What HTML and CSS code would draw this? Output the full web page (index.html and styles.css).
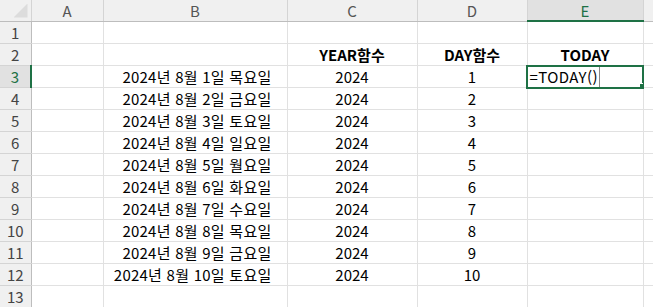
FILE: index.html
```html
<!DOCTYPE html>
<html lang="ko">
<head>
  <meta charset="UTF-8" />
  <title>TODAY 함수</title>
  <link rel="stylesheet" href="styles.css">
</head>
<body>
  <table class="sheet">
    <colgroup>
      <col class="c-head">
      <col class="c-a">
      <col class="c-b">
      <col class="c-c">
      <col class="c-d">
      <col class="c-e">
      <col class="c-f">
    </colgroup>
    <thead>
      <tr>
        <th class="corner"><span class="tri"></span></th>
        <th>A</th>
        <th>B</th>
        <th>C</th>
        <th>D</th>
        <th class="sel-col">E</th>
        <th></th>
      </tr>
    </thead>
    <tbody>
      <tr><th>1</th><td></td><td></td><td></td><td></td><td></td><td></td></tr>
      <tr><th>2</th><td></td><td></td><td class="bold">YEAR함수</td><td class="bold">DAY함수</td><td class="bold">TODAY</td><td></td></tr>
      <tr><th class="sel-row">3</th><td></td><td class="date">2024년 8월 1일 목요일</td><td>2024</td><td>1</td><td class="active"><span class="edit">=TODAY()</span><span class="handle"></span></td><td></td></tr>
      <tr><th>4</th><td></td><td class="date">2024년 8월 2일 금요일</td><td>2024</td><td>2</td><td></td><td></td></tr>
      <tr><th>5</th><td></td><td class="date">2024년 8월 3일 토요일</td><td>2024</td><td>3</td><td></td><td></td></tr>
      <tr><th>6</th><td></td><td class="date">2024년 8월 4일 일요일</td><td>2024</td><td>4</td><td></td><td></td></tr>
      <tr><th>7</th><td></td><td class="date">2024년 8월 5일 월요일</td><td>2024</td><td>5</td><td></td><td></td></tr>
      <tr><th>8</th><td></td><td class="date">2024년 8월 6일 화요일</td><td>2024</td><td>6</td><td></td><td></td></tr>
      <tr><th>9</th><td></td><td class="date">2024년 8월 7일 수요일</td><td>2024</td><td>7</td><td></td><td></td></tr>
      <tr><th>10</th><td></td><td class="date">2024년 8월 8일 목요일</td><td>2024</td><td>8</td><td></td><td></td></tr>
      <tr><th>11</th><td></td><td class="date">2024년 8월 9일 금요일</td><td>2024</td><td>9</td><td></td><td></td></tr>
      <tr><th>12</th><td></td><td class="date">2024년 8월 10일 토요일</td><td>2024</td><td>10</td><td></td><td></td></tr>
      <tr><th>13</th><td></td><td></td><td></td><td></td><td></td><td></td></tr>
    </tbody>
  </table>
</body>
</html>
```

FILE: styles.css
```css
body {
  margin: 0;
  background: #fff;
  font-family: "Noto Sans CJK KR", "Noto Sans", sans-serif;
  overflow: hidden;
}
.sheet {
  border-collapse: collapse;
  table-layout: fixed;
  width: 653px;
  font-size: 15px;
  color: #000;
}
.c-head { width: 31px; }
.c-a { width: 72px; }
.c-b { width: 184px; }
.c-c { width: 130px; }
.c-d { width: 110px; }
.c-e { width: 116px; }
.c-f { width: 10px; }
.sheet th, .sheet td {
  padding: 0;
  overflow: hidden;
  white-space: nowrap;
  line-height: 1;
}
.sheet td {
  height: 21px;
  border-right: 1px solid #e1e1e1;
  border-bottom: 1px solid #e1e1e1;
  text-align: center;
}
.sheet thead th {
  height: 20px;
  background: #f0f0f0;
  border-right: 1px solid #d4d4d4;
  border-bottom: 1px solid #bdbdbd;
  font-weight: normal;
  color: #555;
  font-size: 15px;
}
.sheet tbody th {
  background: #f0f0f0;
  border-right: 1px solid #bdbdbd;
  border-bottom: 1px solid #d4d4d4;
  font-weight: normal;
  color: #444;
  font-size: 15px;
}
.sheet thead th.corner {
  position: relative;
}
.tri {
  position: absolute;
  right: 3px;
  bottom: 3px;
  width: 14px;
  height: 14px;
  background: #dcdcdc;
  clip-path: polygon(100% 0, 100% 100%, 0 100%);
}
.sheet thead th.sel-col {
  background: #e1e1e1;
  color: #1e7145;
  border-bottom: 2px solid #1e7145;
}
.sheet tbody th.sel-row {
  background: #e1e1e1;
  color: #1e7145;
  border-right: 2px solid #1e7145;
}
.date {
  text-align: right !important;
  padding-right: 15px !important;
  letter-spacing: 0.25px;
}
.bold {
  font-weight: bold;
}
.sheet td.active {
  position: relative;
  text-align: left;
  outline: 2px solid #1e7145;
  outline-offset: -1px;
}
.edit {
  padding-left: 2px;
  padding-right: 1px;
  border-right: 1px solid #888;
  letter-spacing: 0.4px;
}
.handle {
  position: absolute;
  right: -3px;
  bottom: -3px;
  width: 5px;
  height: 5px;
  background: #1e7145;
  border: 1px solid #fff;
}
```
